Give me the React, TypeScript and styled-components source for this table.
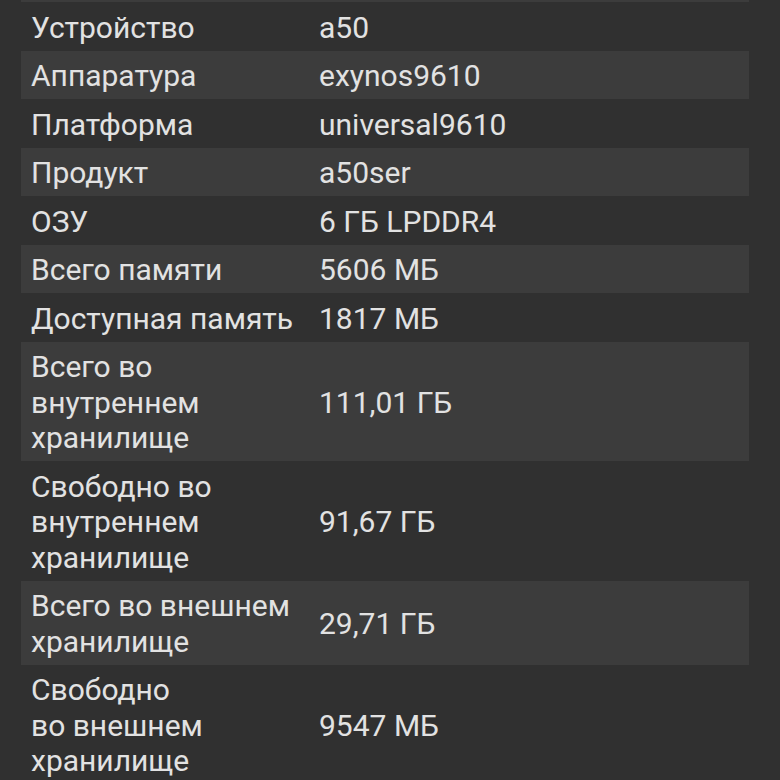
import React from "react";
import styled, { createGlobalStyle } from "styled-components";

const Global = createGlobalStyle`
  html, body { margin: 0; padding: 0; background: #303030; }
  body { width: 780px; height: 780px; overflow: hidden; }
`;

const Page = styled.div`
  width: 780px;
  height: 780px;
  overflow: hidden;
  background: #303030;
  padding: 0 31px 0 21px;
  box-sizing: border-box;
`;

const List = styled.div`
  display: flex;
  flex-direction: column;
`;

const TopEdge = styled.div`
  height: 2px;
  background: #3c3c3c;
`;

const Row = styled.div<{ $striped: boolean }>`
  display: grid;
  grid-template-columns: 288px 1fr;
  align-items: center;
  padding: 7.5px 10px 5.5px;
  background: ${(p) => (p.$striped ? "#3c3c3c" : "transparent")};
  font-family: Roboto, "Noto Sans", sans-serif;
  font-size: 30px;
  line-height: 35.5px;
  color: #e2e2e2;
`;

const Label = styled.div`
  white-space: pre-line;
`;

const Value = styled.div``;

const rows: [string, string][] = [
  ["Устройство", "a50"],
  ["Аппаратура", "exynos9610"],
  ["Платформа", "universal9610"],
  ["Продукт", "a50ser"],
  ["ОЗУ", "6 ГБ LPDDR4"],
  ["Всего памяти", "5606 МБ"],
  ["Доступная память", "1817 МБ"],
  ["Всего во\nвнутреннем\nхранилище", "111,01 ГБ"],
  ["Свободно во\nвнутреннем\nхранилище", "91,67 ГБ"],
  ["Всего во внешнем\nхранилище", "29,71 ГБ"],
  ["Свободно\nво внешнем\nхранилище", "9547 МБ"],
];

export default function App() {
  return (
    <Page>
      <Global />
      <List>
        <TopEdge />
        {rows.map(([l, v], i) => (
          <Row key={i} $striped={i % 2 === 1}>
            <Label>{l}</Label>
            <Value>{v}</Value>
          </Row>
        ))}
      </List>
    </Page>
  );
}
